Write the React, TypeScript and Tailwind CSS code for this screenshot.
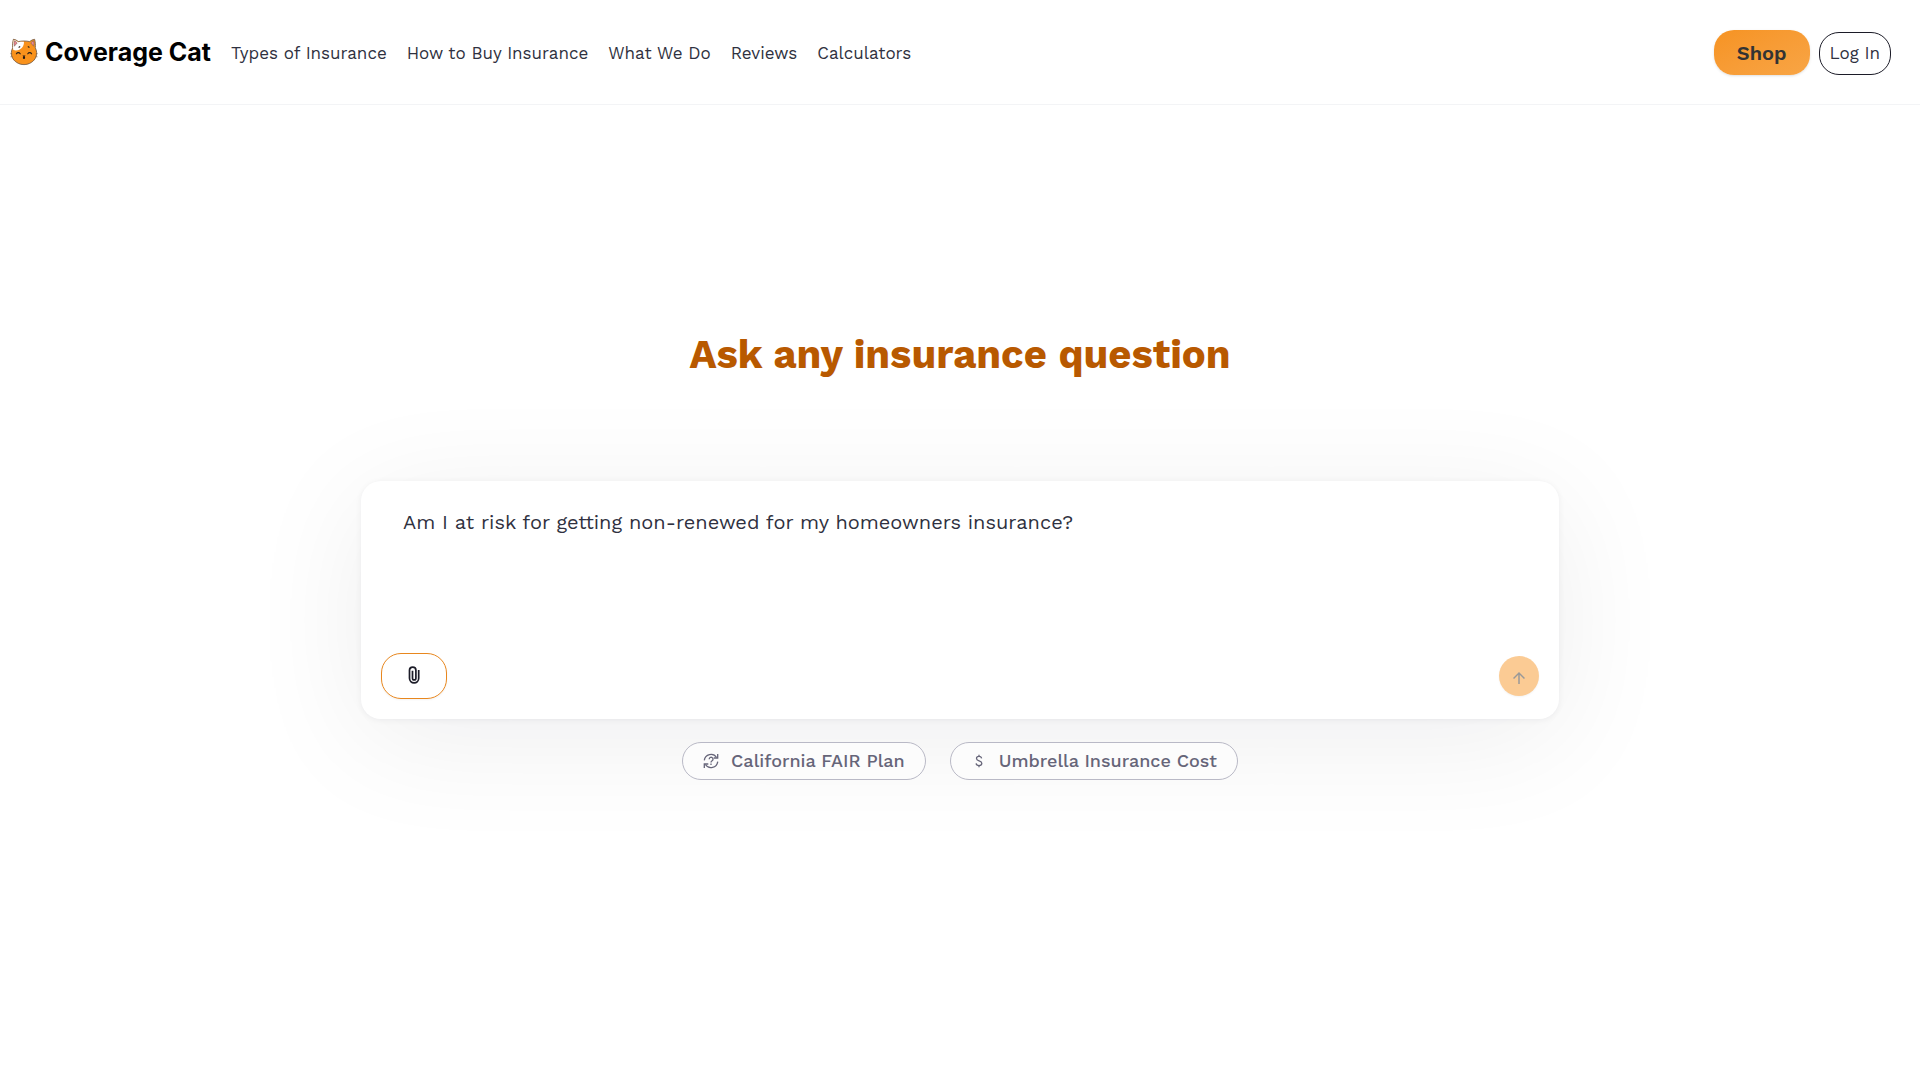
import { useState } from 'react'
import { MdArrowUpward } from 'react-icons/md'

const navLinks = [
	'Types of Insurance',
	'How to Buy Insurance',
	'What We Do',
	'Reviews',
	'Calculators'
]

function CatLogo() {
	return (
		<svg viewBox="0 0 28 28" className="size-7 shrink-0" aria-hidden="true">
			<path
				d="M3.400 1.300c1.900.2 3.600 1.200 4.900 2.300 3.500-.8 7.900-.8 11.400 0 1.300-1.100 3-2.100 4.900-2.300.8 2.700 1 5.600.7 8.400 1.400 3 1.900 6.300.7 9.200-1.900 4.700-6.800 7.700-12 7.700S3.900 23.600 2 18.900c-1.200-2.900-.7-6.200.7-9.200-.3-2.800-.1-5.700.7-8.400z"
				fill="#f9921c"
				stroke="#6a5444"
				strokeWidth=".8"
			/>
			<path
				d="M3.700 1.900c1.800.3 3.300 1.200 4.500 2.300 2-.5 4-.6 5.800-.5.200 3.200-1.400 6.200-3.900 7.500-2.200 1.200-4.600 1.900-6.900.6-.3-3.300-.3-6.900.5-9.900z"
				fill="#fff"
			/>
			<path
				d="M4.300 2.800c1.200.4 2.100 1.100 2.900 2.100L4.300 8.300c-.4-1.800-.4-3.800 0-5.500zM23.700 2.800c-1.200.4-2.100 1.100-2.900 2.100l2.900 3.400c.4-1.800.4-3.800 0-5.500z"
				fill="#ec8790"
				stroke="#6a5444"
				strokeWidth=".5"
			/>
			<path
				d="M6.400 15.800c.9-1.600 2.900-1.600 3.800 0M17.800 15.800c.9-1.600 2.900-1.600 3.800 0M9 9.200l.8-.5M18.200 8.700l.9.500"
				fill="none"
				stroke="#2a211b"
				strokeWidth="1.100"
				strokeLinecap="round"
			/>
			<path
				d="M.3 15.500l2 .6M.4 18.800l2-.2M27.700 15.500l-2 .6M27.600 18.800l-2-.2"
				fill="none"
				stroke="#6a5444"
				strokeWidth=".5"
			/>
			<path
				d="M12.500 17.400h3l-.9 1.400c.8.600.8 2.200-.6 2.200s-1.400-1.600-.6-2.200z"
				fill="#211713"
			/>
		</svg>
	)
}

function PaperclipIcon() {
	return (
		<svg
			viewBox="0 0 12 18"
			className="h-[18px] w-3"
			fill="none"
			stroke="currentColor"
			strokeWidth="1.700"
			aria-hidden="true"
		>
			<path d="M10.700 4v8.300a4.600 4.600 0 0 1-9.200 0V4.300a3.200 3.200 0 0 1 6.400 0v7.900a1.700 1.700 0 0 1-3.400 0V4.800" />
		</svg>
	)
}

function SyncQuestionIcon() {
	return (
		<svg
			viewBox="0 0 16 16"
			className="size-4 shrink-0"
			fill="none"
			stroke="currentColor"
			strokeWidth="1.300"
			aria-hidden="true"
		>
			<path d="M1.300 7.300A6.700 6.700 0 0 1 13.600 4.500M14.700 8.700A6.700 6.700 0 0 1 2.400 11.500" />
			<path d="M14.700 1v4h-4M1.300 15v-4h4" />
			<path d="M6.200 6.200a1.900 1.900 0 1 1 2.900 1.600c-.8.500-1.100.8-1.100 1.600M8 10.600v1.300" />
		</svg>
	)
}

function DollarIcon() {
	return (
		<svg
			viewBox="0 0 16 16"
			className="size-4 shrink-0"
			fill="none"
			stroke="currentColor"
			strokeWidth="1.300"
			aria-hidden="true"
		>
			<path d="M10.600 5.300C10.400 4 9.400 3.300 8 3.300c-1.500 0-2.500.8-2.500 2.100 0 3 5.300 1.800 5.300 4.900 0 1.400-1.200 2.300-2.800 2.300s-2.700-.8-2.900-2.200M8 1.700v1.700M8 12.500v1.800" />
		</svg>
	)
}

const suggestions = [
	{ label: 'California FAIR Plan', icon: <SyncQuestionIcon /> },
	{ label: 'Umbrella Insurance Cost', icon: <DollarIcon /> }
]

function Header() {
	return (
		<header className="flex items-center justify-between border-b border-gray-100 pt-[30px] pr-[29px] pb-[29px] pl-2.5">
			<div className="flex items-center gap-5">
				<a href="#" className="flex items-center gap-[7px] pb-0.5">
					<CatLogo />
					<span className="font-[Inter,sans-serif] text-[25px] leading-8 font-bold text-black">
						Coverage Cat
					</span>
				</a>
				<nav className="flex items-center gap-5 pt-0.5 text-[17px] text-[#2f3140]">
					{navLinks.map((link) => (
						<a key={link} href="#">
							{link}
						</a>
					))}
				</nav>
			</div>
			<div className="flex items-end gap-[9px]">
				<a
					href="#"
					className="flex h-[45px] items-center rounded-[20px] bg-linear-to-br from-[#f69322] to-[#f8a545] px-[23px] text-xl font-semibold text-[#333] shadow-sm"
				>
					Shop
				</a>
				<a
					href="#"
					className="flex h-[43px] items-center rounded-[20px] border border-[#1c1c28] px-2.5 text-[17px] text-[#2f3140]"
				>
					Log In
				</a>
			</div>
		</header>
	)
}

export default function App() {
	const [question, setQuestion] = useState(
		'Am I at risk for getting non-renewed for my homeowners insurance?'
	)

	return (
		<div className="min-h-screen bg-white font-['Work_Sans',Inter,sans-serif]">
			<Header />

			<main className="flex flex-col items-center px-6 pt-56">
				<h1 className="text-[40px] leading-[52px] font-bold text-[#b85900]">
					Ask any insurance question
				</h1>

				<form
					onSubmit={(e) => e.preventDefault()}
					className="mt-25 w-full max-w-[1198px] rounded-[20px] bg-white p-5 shadow-[0_20px_120px_rgba(20,20,30,0.07),0_1px_6px_rgba(20,20,50,0.06)]"
				>
					<textarea
						aria-label="Your question"
						value={question}
						onChange={(e) => setQuestion(e.target.value)}
						className="block h-[152px] w-full resize-none px-[22px] py-[5px] text-xl leading-8 text-[#2f3140] outline-none"
					/>
					<div className="flex items-center justify-between">
						<button
							type="button"
							aria-label="Attach a file"
							className="flex h-[46px] w-[66px] items-center justify-center rounded-[20px] border border-[#e8871e] pb-0.5 text-[#1c1c28] shadow-xs"
						>
							<PaperclipIcon />
						</button>
						<button
							type="submit"
							aria-label="Send"
							className="flex size-10 items-center justify-center rounded-full bg-[#fbcb94] pt-1 text-[#999] shadow-xs"
						>
							<MdArrowUpward className="size-[18px]" />
						</button>
					</div>
				</form>

				<div className="mt-[23px] flex flex-wrap justify-center gap-6">
					{suggestions.map(({ label, icon }) => (
						<button
							key={label}
							type="button"
							className="flex items-center gap-3 rounded-full border border-[#b9b9c6] bg-[#fcfcfc] px-5 py-1 text-lg font-medium text-[#666579]"
						>
							{icon}
							{label}
						</button>
					))}
				</div>
			</main>
		</div>
	)
}
